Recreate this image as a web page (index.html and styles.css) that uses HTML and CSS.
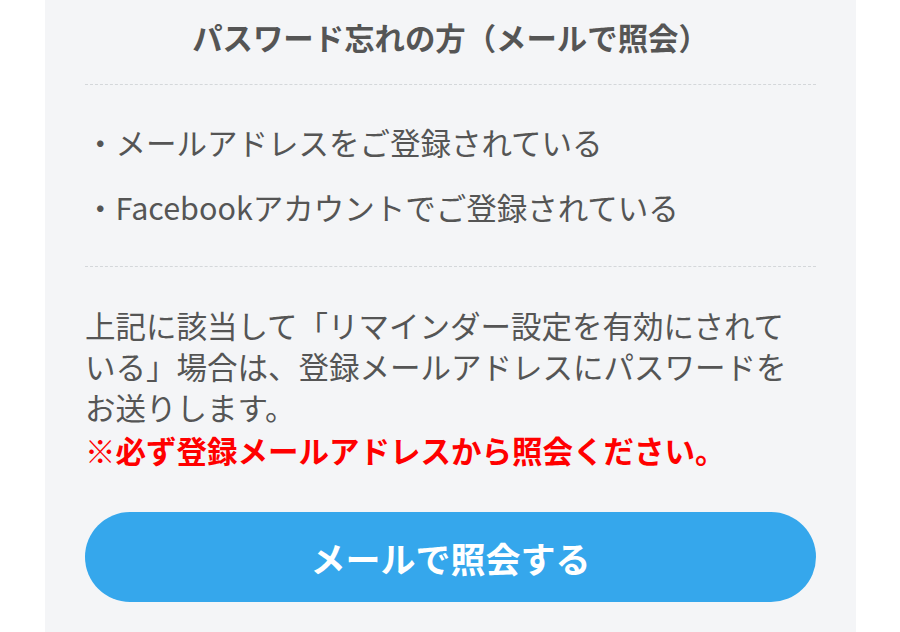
FILE: index.html
```html
<!DOCTYPE html>
<html lang="ja">
<head>
  <meta charset="UTF-8" />
  <meta name="viewport" content="width=device-width, initial-scale=1" />
  <title>パスワード忘れの方</title>
  <link rel="stylesheet" href="styles.css">
</head>
<body>
  <div id="panel">
    <h2 class="panel-title">パスワード忘れの方（メールで照会）</h2>
    <ul class="cond-list">
      <li>・メールアドレスをご登録されている</li>
      <li>・Facebookアカウントでご登録されている</li>
    </ul>
    <p class="note">上記に該当して「リマインダー設定を有効にされている」場合は、登録メールアドレスにパスワードをお送りします。</p>
    <p class="warn">※必ず登録メールアドレスから照会ください。</p>
    <button class="mail-button" type="button">メールで照会する</button>
  </div>
</body>
</html>
```

FILE: styles.css
```css
body, html {
  margin: 0;
  padding: 0;
  background: #ffffff;
  font-family: "Noto Sans CJK JP", "Noto Sans", sans-serif;
  color: #555555;
}
#panel {
  width: 811px;
  margin-left: 45px;
  min-height: 632px;
  padding: 14px 40px 30px;
  box-sizing: border-box;
  background: #f4f5f7;
}
.panel-title {
  margin: 0;
  font-size: 30.4px;
  line-height: 46px;
  font-weight: 700;
  text-align: center;
  color: #555555;
  padding-bottom: 24px;
  border-bottom: 1px dashed #d4d7da;
}
.cond-list {
  list-style: none;
  margin: 0;
  padding: 34px 0 36px;
  border-bottom: 1px dashed #d4d7da;
}
.cond-list li {
  font-size: 30.5px;
  line-height: 46px;
}
.cond-list li + li {
  margin-top: 19px;
}
.note {
  margin: 38px 0 0;
  padding-right: 16px;
  font-size: 30.5px;
  line-height: 41px;
}
.warn {
  margin: 0;
  font-size: 30.5px;
  line-height: 45px;
  font-weight: 700;
  color: #ff0000;
}
.mail-button {
  display: block;
  width: 100%;
  height: 90px;
  margin-top: 39px;
  border: none;
  border-radius: 45px;
  background: #35a7ec;
  color: #ffffff;
  font-family: inherit;
  font-size: 35px;
  font-weight: 700;
  cursor: pointer;
}
```
